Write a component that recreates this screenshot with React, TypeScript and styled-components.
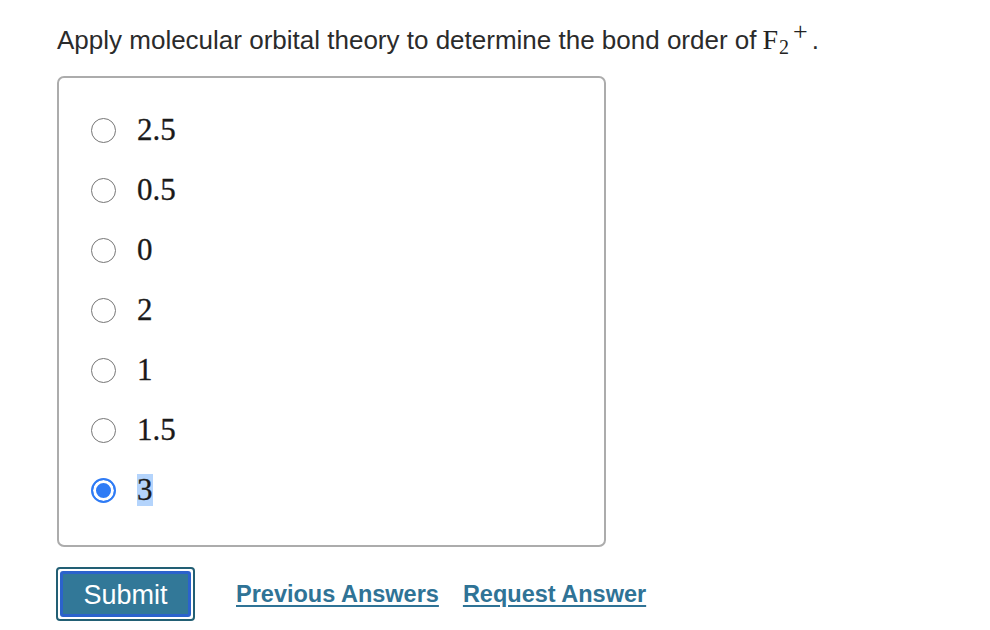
import React from 'react';
import styled, { createGlobalStyle } from 'styled-components';

const Global = createGlobalStyle`
  html, body {
    margin: 0;
    padding: 0;
    background: #ffffff;
  }
  body {
    font-family: "Liberation Sans", Arial, sans-serif;
    color: #222;
  }
`;

const Page = styled.div`
  padding: 25px 0 0 57px;
`;

const Question = styled.p`
  margin: 0;
  font-size: 26px;
  line-height: 30px;
  height: 30px;
  color: #2b2b2b;
  white-space: nowrap;
`;

const Math = styled.span`
  font-family: "Liberation Serif", "DejaVu Serif", serif;
  font-size: 28px;
  line-height: 0;
  margin-left: 6px;
  margin-right: 4px;
  color: #222;

  sub {
    font-size: 20px;
    line-height: 0;
    vertical-align: -5px;
    margin-left: 1px;
  }
  sup {
    font-size: 26px;
    line-height: 0;
    vertical-align: 9px;
    margin-left: 4px;
  }
`;

const Panel = styled.div`
  box-sizing: border-box;
  width: 549px;
  margin-top: 21px;
  border: 2px solid #acacac;
  border-radius: 7px;
  padding: 22px 0 25px 32px;
  display: flex;
  flex-direction: column;
`;

const Option = styled.label`
  display: flex;
  align-items: center;
  gap: 21px;
  height: 60px;
  cursor: pointer;
`;

const Radio = styled.span<{ $checked?: boolean }>`
  box-sizing: border-box;
  width: 25px;
  height: 25px;
  border-radius: 50%;
  border: ${({ $checked }) => ($checked ? '2.5px solid #2f7bf5' : '1.5px solid #767676')};
  background: ${({ $checked }) => ($checked ? '#2f7bf5' : '#fff')};
  box-shadow: ${({ $checked }) => ($checked ? 'inset 0 0 0 3px #fff' : 'none')};
  flex: none;
`;

const Value = styled.span<{ $selected?: boolean }>`
  font-family: "Liberation Serif", "DejaVu Serif", serif;
  font-size: 31px;
  line-height: 32px;
  color: #1a1a1a;
  -webkit-text-stroke: 0.3px #1a1a1a;
  background: ${({ $selected }) => ($selected ? '#b4d4fc' : 'transparent')};
`;

const Actions = styled.div`
  margin-top: 20px;
  display: flex;
  align-items: center;
  white-space: nowrap;
  margin-left: -1px;
`;

const SubmitButton = styled.button`
  box-sizing: border-box;
  width: 139px;
  height: 54px;
  border: 2px solid #225f74;
  border-radius: 4px;
  background: #fff;
  padding: 2px;
  cursor: pointer;
  margin-right: 41px;

  span {
    display: flex;
    align-items: center;
    justify-content: center;
    height: 100%;
    padding-top: 2px;
    border: 3px solid #2b62cc;
    border-radius: 3px;
    background: #327898;
    color: #fff;
    font-family: "Liberation Sans", Arial, sans-serif;
    font-size: 27px;
    box-sizing: border-box;
  }
`;

const TextLink = styled.a`
  color: #2f7396;
  font-weight: bold;
  font-size: 23.5px;
  line-height: 26px;
  text-decoration: underline;
  text-underline-offset: 3px;
  text-decoration-thickness: 2px;
  cursor: pointer;
  & + & {
    margin-left: 24px;
  }
`;

const options = ['2.5', '0.5', '0', '2', '1', '1.5', '3'];

export default function App() {
  return (
    <Page>
      <Global />
      <Question>
        Apply molecular orbital theory to determine the bond order of
        <Math>
          F<sub>2</sub>
          <sup>+</sup>
        </Math>
        .
      </Question>
      <Panel>
        {options.map((o) => {
          const checked = o === '3';
          return (
            <Option key={o}>
              <Radio $checked={checked} />
              <Value $selected={checked}>{o}</Value>
            </Option>
          );
        })}
      </Panel>
      <Actions>
        <SubmitButton>
          <span>Submit</span>
        </SubmitButton>
        <TextLink>Previous Answers</TextLink>
        <TextLink>Request Answer</TextLink>
      </Actions>
    </Page>
  );
}
